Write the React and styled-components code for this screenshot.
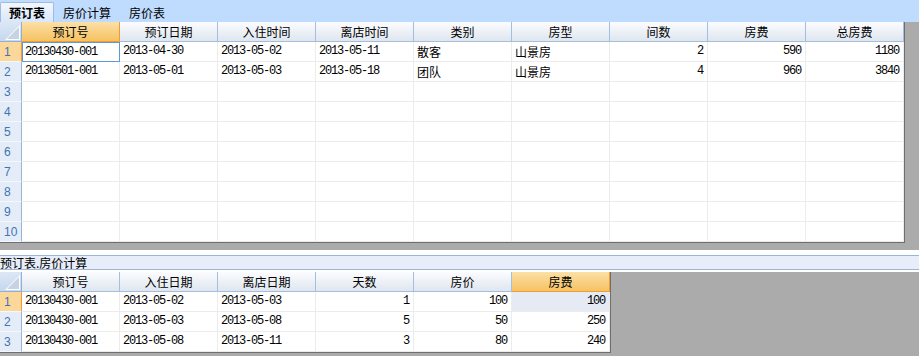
import React from "react";
import styled, { createGlobalStyle, css } from "styled-components";

const Global = createGlobalStyle`
	html, body { margin: 0; padding: 0; }
	body {
		background: #ababab;
		font-family: "Noto Sans CJK SC", "Liberation Sans", sans-serif;
		font-size: 12px;
		color: #000;
	}
`;

const topCols = ["预订号", "预订日期", "入住时间", "离店时间", "类别", "房型", "间数", "房费", "总房费"];
const topRows = [
	["20130430-001", "2013-04-30", "2013-05-02", "2013-05-11", "散客", "山景房", 2, 590, 1180],
	["20130501-001", "2013-05-01", "2013-05-03", "2013-05-18", "团队", "山景房", 4, 960, 3840],
];

const bottomCols = ["预订号", "入住日期", "离店日期", "天数", "房价", "房费"];
const bottomRows = [
	["20130430-001", "2013-05-02", "2013-05-03", 1, 100, 100],
	["20130430-001", "2013-05-03", "2013-05-08", 5, 50, 250],
	["20130430-001", "2013-05-08", "2013-05-11", 3, 80, 240],
];

function Grid({ cols, rows, total, activeCol, focusCell, shadeCell }) {
	const list = Array.from({ length: total }, (_, i) => rows[i] || null);
	return (
		<Sheet $cols={cols.length}>
			<Corner>
				<svg width="15" height="15" viewBox="0 0 15 15">
					<polygon points="15,0 15,15 0,15" fill="#fff" />
					<polygon points="14,2 14,14 2,14" fill="#c7d3e3" />
				</svg>
			</Corner>
			{cols.map((c, i) => (
				<HeadCell key={c + i} $active={i === activeCol}>{c}</HeadCell>
			))}
			{list.map((row, r) => (
				<React.Fragment key={r}>
					<RowHead $active={r === 0}>{r + 1}</RowHead>
					{cols.map((_, c) => {
						const v = row ? row[c] : "";
						const num = typeof v === "number";
						const isFocus = focusCell && focusCell[0] === r && focusCell[1] === c;
						const isShade = shadeCell && shadeCell[0] === r && shadeCell[1] === c;
						return (
							<Cell key={c} $num={num} $focus={isFocus} $shade={isShade} $mono={/^[0-9-]+$/.test(String(v))}>
								{v}
							</Cell>
						);
					})}
				</React.Fragment>
			))}
		</Sheet>
	);
}

export default function App() {
	return (
		<Page>
			<Global />
			<TabBar>
				<Tab $active>预订表</Tab>
				<Tab>房价计算</Tab>
				<Tab>房价表</Tab>
			</TabBar>
			<Grid cols={topCols} rows={topRows} total={10} activeCol={0} focusCell={[0, 0]} />
			<Caption>
				<CaptionText>预订表.房价计算</CaptionText>
			</Caption>
			<Grid cols={bottomCols} rows={bottomRows} total={3} activeCol={5} shadeCell={[0, 5]} />
		</Page>
	);
}

// ===================================================================//
const Page = styled.div`
	width: 919px;
	height: 356px;
	overflow: hidden;
	background: #ababab;
	display: flex;
	flex-direction: column;
	align-items: flex-start;
`;

const TabBar = styled.div`
	width: 100%;
	height: 22px;
	box-sizing: border-box;
	background: #bfdbfd;
	display: flex;
	align-items: flex-end;
`;

const Tab = styled.div`
	height: 20px;
	line-height: 19px;
	box-sizing: border-box;
	padding: 1px 9px 0;
	font-size: 12px;
	${(p) =>
		p.$active &&
		css`
			font-weight: bold;
			background: linear-gradient(#f2f7fe, #d9e7fa);
			border: 1px solid #9ebce2;
			border-bottom: none;
			border-radius: 2px 2px 0 0;
			padding: 0 8px;
		`}
`;

const Sheet = styled.div`
	display: grid;
	grid-template-columns: 22px repeat(${(p) => p.$cols}, 98px);
	grid-auto-rows: 20px;
	background: #fff;
	border-right: 1px solid #6e6e6e;
	border-bottom: 1px solid #6e6e6e;
`;

const Corner = styled.div`
	background: linear-gradient(#dce7f5, #c6d8ee);
	border-right: 1px solid #8fb0d8;
	border-bottom: 1px solid #8fb0d8;
	display: flex;
	align-items: flex-end;
	justify-content: flex-end;
	padding: 0 1px 1px 0;
`;

const HeadCell = styled.div`
	box-sizing: border-box;
	text-align: center;
	line-height: 19px;
	font-size: 12px;
	border-right: 1px solid #a4bedd;
	border-bottom: 1px solid #a4bedd;
	background: linear-gradient(#fbfcfe, #dfe6ef);
	${(p) =>
		p.$active &&
		css`
			background: linear-gradient(#fbe0a6, #f6c262);
			border-right: 1px solid #f29a35;
			border-bottom: 1px solid #f29a35;
		`}
`;

const RowHead = styled.div`
	box-sizing: border-box;
	padding-left: 4px;
	line-height: 20px;
	font-family: "Liberation Sans", sans-serif;
	font-size: 12px;
	color: #3f74b5;
	background: #e4ecf7;
	border-right: 1px solid #9ab5d8;
	border-bottom: 1px solid #f4f7fb;
	${(p) =>
		p.$active &&
		css`
			background: #fcd79a;
			border-right: 1px solid #f39a36;
		`}
`;

const Cell = styled.div`
	box-sizing: border-box;
	line-height: 19px;
	padding: 0 3px;
	white-space: nowrap;
	overflow: hidden;
	border-right: 1px solid #ececec;
	border-bottom: 1px solid #ececec;
	text-align: ${(p) => (p.$num ? "right" : "left")};
	${(p) =>
		p.$num &&
		css`
			padding-right: 4px;
		`}
	${(p) =>
		p.$mono &&
		css`
			font-family: "Liberation Mono", monospace;
			font-size: 12px;
			letter-spacing: -1.2px;
		`}
	${(p) =>
		p.$shade &&
		css`
			background: #e6eaf5;
		`}
	${(p) =>
		p.$focus &&
		css`
			border: 1px solid #5b9bd5;
			padding-left: 2px;
		`}
`;

const Caption = styled.div`
	margin-top: 7px;
	width: 100%;
	height: 22px;
	box-sizing: border-box;
	background: #fff;
	padding: 5px 0 2px;
`;

const CaptionText = styled.div`
	height: 15px;
	box-sizing: border-box;
	border-top: 1px solid #9ab5d8;
	border-bottom: 1px solid #9ab5d8;
	background: #e8eef9;
	line-height: 13px;
	font-size: 12px;
	white-space: nowrap;
`;
